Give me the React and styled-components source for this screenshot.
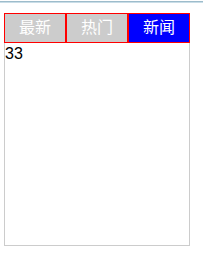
import React, { useState } from "react";
import styled, { createGlobalStyle } from "styled-components";

const Global = createGlobalStyle`
  html, body { margin: 0; padding: 0; background: #fff; }
  body { font-family: "Liberation Sans", "Noto Sans CJK SC", sans-serif; }
`;

const TopRule = styled.div`
  margin-top: 1px;
  height: 0;
  border-top: 1px solid #9dbccb;
  border-bottom: 1px solid #c9dde7;
`;

const Wrap = styled.div`
  margin: 10px 0 0 4px;
  width: 186px;
`;

const Tabs = styled.ul`
  display: flex;
  margin: 0;
  padding: 0;
  list-style: none;
`;

const Tab = styled.li`
  box-sizing: border-box;
  width: 62px;
  height: 30px;
  line-height: 28px;
  border: 1px solid #ff0000;
  background: ${(p) => (p.$active ? "#0000ff" : "#cccccc")};
  color: #fff;
  font-size: 16px;
  text-align: center;
  cursor: pointer;
`;

const Panel = styled.div`
  box-sizing: border-box;
  height: 203px;
  border: 1px solid #cccccc;
  border-top: none;
  padding-top: 1px;
  font-size: 16px;
  line-height: 19px;
  color: #000;
`;

const tabs = ["最新", "热门", "新闻"];
const contents = ["11", "22", "33"];

export default function App() {
  const [active, setActive] = useState(2);
  return (
    <>
      <Global />
      <TopRule />
      <Wrap>
        <Tabs>
          {tabs.map((t, i) => (
            <Tab key={t} $active={i === active} onMouseEnter={() => setActive(i)}>
              {t}
            </Tab>
          ))}
        </Tabs>
        <Panel>{contents[active]}</Panel>
      </Wrap>
    </>
  );
}
